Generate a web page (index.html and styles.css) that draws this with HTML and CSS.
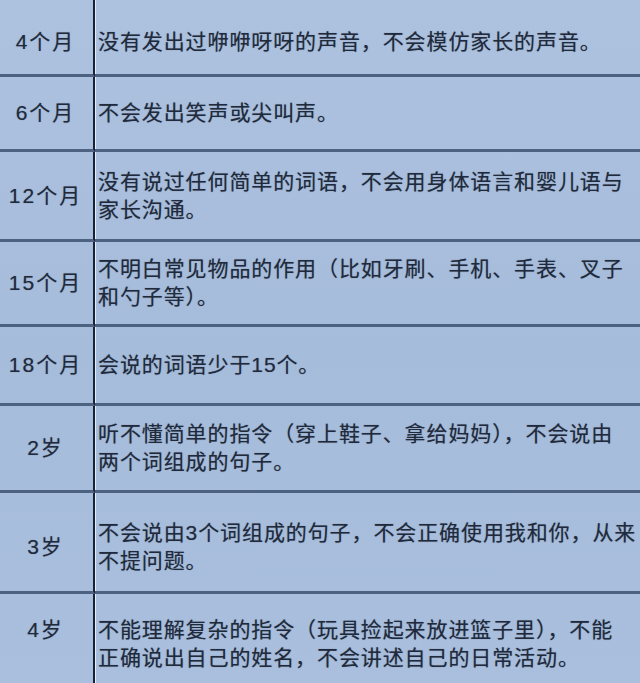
FILE: index.html
```html
<!DOCTYPE html>
<html lang="zh-CN">
<head>
<meta charset="utf-8">
<title>语言发育预警</title>
<link rel="stylesheet" href="styles.css">
</head>
<body>
<div class="table">
  <div class="age first">4个月</div>
  <div class="desc first">没有发出过咿咿呀呀的声音，不会模仿家长的声音。</div>

  <div class="age">6个月</div>
  <div class="desc">不会发出笑声或尖叫声。</div>

  <div class="age">12个月</div>
  <div class="desc">没有说过任何简单的词语，不会用身体语言和婴儿语与<br>家长沟通。</div>

  <div class="age">15个月</div>
  <div class="desc">不明白常见物品的作用（比如牙刷、手机、手表、叉子<br>和勺子等）。</div>

  <div class="age">18个月</div>
  <div class="desc">会说的词语少于15个。</div>

  <div class="age">2岁</div>
  <div class="desc">听不懂简单的指令（穿上鞋子、拿给妈妈），不会说由<br>两个词组成的句子。</div>

  <div class="age low">3岁</div>
  <div class="desc low">不会说由3个词组成的句子，不会正确使用我和你，从来<br>不提问题。</div>

  <div class="age last">4岁</div>
  <div class="desc last">不能理解复杂的指令（玩具捡起来放进篮子里），不能<br>正确说出自己的姓名，不会讲述自己的日常活动。</div>
</div>
</body>
</html>
```

FILE: styles.css
```css
html, body {
  margin: 0;
  padding: 0;
  background: #a9bfdd;
}

body {
  width: 640px;
  height: 683px;
  overflow: hidden;
}

.table {
  display: grid;
  grid-template-columns: 95px 1fr;
  grid-template-rows: 77px 75px 90px 85px 79px 87px 101px 100px;
  background: linear-gradient(180deg, #adc2df 0%, #a6bcdb 50%, #a9bfdd 100%);
  font-family: "Liberation Sans", "Noto Sans CJK SC", sans-serif;
  font-size: 21px;
  line-height: 28px;
  color: #1f2a3c;
}

.age,
.desc {
  box-sizing: border-box;
  border-bottom: 3px solid #4d6180;
  display: flex;
  align-items: center;
  text-shadow: 0 0 1px rgba(31, 42, 60, 0.45);
}

.age {
  justify-content: center;
  border-right: 2px solid #16213a;
  box-shadow: 1px 0 0 #e4ecf7;
  letter-spacing: 2px;
  padding-right: 2px;
}

.desc {
  padding-left: 3px;
  letter-spacing: 0.9px;
  white-space: nowrap;
}

.first {
  padding-top: 10px;
}

.low {
  padding-top: 10px;
}

.last {
  align-items: flex-start;
  padding-top: 22px;
}
```
